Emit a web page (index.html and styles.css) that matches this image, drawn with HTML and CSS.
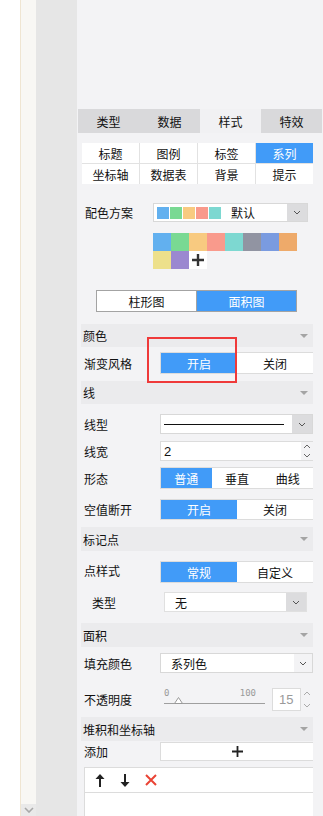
FILE: index.html
```html
<!DOCTYPE html>
<html lang="zh">
<head>
  <meta charset="UTF-8">
  <title>样式</title>
  <link rel="stylesheet" href="styles.css">
</head>
<body>
  <div class="frame">
    <div class="gutter"></div>
    <div class="scroll">
      <div class="scroll-btn">
        <svg width="10" height="6" viewBox="0 0 10 6"><polyline points="1,1 5,5 9,1" fill="none" stroke="#a8a8a8" stroke-width="1.6"/></svg>
      </div>
    </div>
    <div class="side"></div>

    <div class="panel">
      <div class="tabs">
        <div class="tab">类型</div>
        <div class="tab">数据</div>
        <div class="tab active">样式</div>
        <div class="tab">特效</div>
      </div>

      <div class="subtabs">
        <div>标题</div><div>图例</div><div>标签</div><div class="on">系列</div>
        <div>坐标轴</div><div>数据表</div><div>背景</div><div>提示</div>
      </div>

      <div class="scheme">
        <span class="scheme-label">配色方案</span>
        <div class="select scheme-select">
          <span class="mini"><i class="c1"></i><i class="c2"></i><i class="c3"></i><i class="c4"></i><i class="c5"></i></span>
          <span class="scheme-name">默认</span>
          <span class="arrow"><svg width="8" height="5" viewBox="0 0 8 5"><polyline points="1,1 4,4 7,1" fill="none" stroke="#555" stroke-width="1"/></svg></span>
        </div>
      </div>

      <div class="palette">
        <i class="c1"></i><i class="c2"></i><i class="c3"></i><i class="c4"></i><i class="c5"></i><i class="c6"></i><i class="c7"></i><i class="c8"></i>
        <i class="c9"></i><i class="c10"></i>
        <i class="plus"><svg width="12" height="12" viewBox="0 0 12 12"><path d="M6 0V12M0 6H12" stroke="#333" stroke-width="2.4"/></svg></i>
      </div>

      <div class="chart-type">
        <div>柱形图</div>
        <div class="on">面积图</div>
      </div>

      <div class="sec mt12">颜色<span class="tri"></span></div>
      <div class="row mt5">
        <span class="label">渐变风格</span>
        <div class="switch"><div class="on">开启</div><div>关闭</div></div>
      </div>

      <div class="sec mt7">线<span class="tri"></span></div>
      <div class="row mt10">
        <span class="label">线型</span>
        <div class="select">
          <span class="line-sample"></span>
          <span class="arrow"><svg width="8" height="5" viewBox="0 0 8 5"><polyline points="1,1 4,4 7,1" fill="none" stroke="#555" stroke-width="1"/></svg></span>
        </div>
      </div>
      <div class="row mt7">
        <span class="label">线宽</span>
        <div class="number">
          <span class="num-val">2</span>
          <span class="spin">
            <svg width="8" height="5" viewBox="0 0 8 5"><polyline points="1,4 4,1 7,4" fill="none" stroke="#666" stroke-width="1"/></svg>
            <svg width="8" height="5" viewBox="0 0 8 5"><polyline points="1,1 4,4 7,1" fill="none" stroke="#666" stroke-width="1"/></svg>
          </span>
        </div>
      </div>
      <div class="row mt6">
        <span class="label">形态</span>
        <div class="switch three"><div class="on">普通</div><div>垂直</div><div>曲线</div></div>
      </div>
      <div class="row mt10">
        <span class="label">空值断开</span>
        <div class="switch short"><div class="on">开启</div><div>关闭</div></div>
      </div>

      <div class="sec mt7 tall">标记点<span class="tri"></span></div>
      <div class="row mt10">
        <span class="label up">点样式</span>
        <div class="switch"><div class="on">常规</div><div>自定义</div></div>
      </div>
      <div class="row mt9">
        <span class="label sub">类型</span>
        <div class="select narrow">
          <span class="sel-text">无</span>
          <span class="arrow"><svg width="8" height="5" viewBox="0 0 8 5"><polyline points="1,1 4,4 7,1" fill="none" stroke="#555" stroke-width="1"/></svg></span>
        </div>
      </div>

      <div class="sec mt11 tall">面积<span class="tri"></span></div>
      <div class="row mt6">
        <span class="label">填充颜色</span>
        <div class="select">
          <span class="sel-text">系列色</span>
          <span class="arrow light"><svg width="8" height="5" viewBox="0 0 8 5"><polyline points="1,1 4,4 7,1" fill="none" stroke="#555" stroke-width="1"/></svg></span>
        </div>
      </div>
      <div class="row mt15">
        <span class="label">不透明度</span>
        <div class="slider">
          <span class="ticks"><span>0</span><span>100</span></span>
          <span class="track"><svg class="thumb" width="9" height="7" viewBox="0 0 9 7"><polygon points="4.5,0.5 8.5,6.5 0.5,6.5" fill="#fff" stroke="#999" stroke-width="1"/></svg></span>
        </div>
        <div class="number small">
          <span class="num-val grey">15</span>
        </div>
        <span class="spin loose">
          <svg width="8" height="5" viewBox="0 0 8 5"><polyline points="1,4 4,1 7,4" fill="none" stroke="#aaa" stroke-width="1"/></svg>
          <svg width="8" height="5" viewBox="0 0 8 5"><polyline points="1,1 4,4 7,1" fill="none" stroke="#aaa" stroke-width="1"/></svg>
        </span>
      </div>

      <div class="sec mt6 tall">堆积和坐标轴<span class="tri"></span></div>
      <div class="row mt1">
        <span class="label">添加</span>
        <div class="add-btn"><svg width="11" height="11" viewBox="0 0 11 11"><path d="M5.5 0V11M0 5.5H11" stroke="#222" stroke-width="1.8"/></svg></div>
      </div>

      <div class="axis-box">
        <div class="axis-tools">
          <svg width="10" height="13" viewBox="0 0 10 13"><path d="M5 13V3" stroke="#222" stroke-width="2"/><polygon points="5,0 9.5,5 0.5,5" fill="#222"/></svg>
          <svg width="10" height="13" viewBox="0 0 10 13"><path d="M5 0V10" stroke="#222" stroke-width="2"/><polygon points="5,13 9.5,8 0.5,8" fill="#222"/></svg>
          <svg width="12" height="12" viewBox="0 0 12 12"><path d="M1 1L11 11M11 1L1 11" stroke="#ea4335" stroke-width="2"/></svg>
        </div>
      </div>

      <div class="mark"></div>
    </div>
  </div>
</body>
</html>
```

FILE: styles.css
```css
body {
  margin: 0;
  font-family: "Noto Sans CJK SC", "Noto Sans", sans-serif;
  font-size: 12px;
  color: #111;
  background: #fff;
}
.frame {
  display: flex;
  width: 323px;
  height: 816px;
  overflow: hidden;
}
.gutter {
  width: 20px;
  background: #fff;
  border-right: 1px solid #efe5d2;
}
.scroll {
  width: 15px;
  background: #f8f7f4;
  display: flex;
  flex-direction: column;
  justify-content: flex-end;
}
.scroll-btn {
  height: 12px;
  background: #e9e9e9;
  display: flex;
  align-items: center;
  justify-content: center;
}
.side {
  width: 41px;
  background: #e6e6e6;
}
.panel {
  position: relative;
  width: 246px;
  background: #f3f3f5;
  padding: 109px 10px 0 4px;
  box-sizing: border-box;
}

/* tabs */
.tabs {
  display: flex;
  width: 244px;
  margin-left: -3px;
  height: 24px;
}
.tab {
  flex: 1;
  display: flex;
  align-items: center;
  justify-content: center;
  background: #d9d9db;
  font-size: 12px;
}
.tab.active {
  background: #f1f1f3;
}

.subtabs {
  display: grid;
  grid-template-columns: repeat(4, 1fr);
  gap: 1px;
  background: #e2e2e2;
  margin: 10px 0 0 1px;
  width: 231px;
}
.subtabs div {
  height: 20px;
  background: #fff;
  display: flex;
  align-items: center;
  justify-content: center;
}
.subtabs .on {
  background: #419bf8;
  color: #fff;
}

/* color scheme */
.scheme {
  display: flex;
  align-items: center;
  margin-top: 19px;
  height: 19px;
}
.scheme-label {
  width: 72px;
  padding-left: 4px;
  box-sizing: border-box;
}
.select {
  flex: 1;
  height: 19px;
  background: #fff;
  border: 1px solid #d8d8d8;
  box-sizing: border-box;
  display: flex;
  align-items: center;
}
.scheme-select {
  flex: none;
  width: 155px;
}
.mini {
  display: flex;
  gap: 1px;
  margin-left: 3px;
}
.mini i {
  width: 12px;
  height: 12px;
}
.scheme-name {
  margin-left: 10px;
  flex: 1;
}
.arrow {
  width: 20px;
  align-self: stretch;
  margin-left: auto;
  background: #dcdcde;
  display: flex;
  align-items: center;
  justify-content: center;
}
.arrow.light {
  background: #f3f3f5;
  width: 18px;
}
.c1 { background: #62b0ef; }
.c2 { background: #79d993; }
.c3 { background: #f8ca80; }
.c4 { background: #f99a8c; }
.c5 { background: #7dd8d1; }
.c6 { background: #9194a2; }
.c7 { background: #7a9be0; }
.c8 { background: #eeaa6a; }
.c9 { background: #ede08b; }
.c10 { background: #9b88d0; }

.palette {
  display: grid;
  grid-template-columns: repeat(8, 18px);
  grid-auto-rows: 18px;
  margin: 11px 0 0 72px;
}
.palette i {
  display: block;
}
.palette .plus {
  background: #fff;
  display: flex;
  align-items: center;
  justify-content: center;
}

.chart-type {
  display: flex;
  width: 201px;
  height: 22px;
  margin: 21px 0 0 15px;
  border: 1px solid #a3a3a3;
  box-sizing: border-box;
}
.chart-type div {
  flex: 1;
  background: #fff;
  display: flex;
  align-items: center;
  justify-content: center;
}
.chart-type .on {
  background: #419bf8;
  color: #fff;
  border-left: 1px solid #a3a3a3;
}

/* sections */
.sec {
  position: relative;
  height: 23px;
  background: #ebebed;
  display: flex;
  align-items: center;
  padding-left: 2px;
}
.sec.tall {
  height: 24px;
}
.tri {
  position: absolute;
  right: 5px;
  top: 10px;
  border-left: 4px solid transparent;
  border-right: 4px solid transparent;
  border-top: 4px solid #a4a4a4;
}
.row {
  display: flex;
  align-items: center;
}
.label {
  width: 79px;
  flex: none;
  padding-left: 3px;
  box-sizing: border-box;
}
.label.up {
  align-self: flex-start;
  margin-top: 1px;
}
.label.sub {
  padding-left: 11px;
  width: 83px;
}
.switch {
  flex: 1;
  display: flex;
  height: 22px;
  border: 1px solid #dcdcdc;
  border-right: none;
  box-sizing: border-box;
  background: #fff;
}
.switch.short {
  height: 21px;
}
.switch div {
  flex: 1;
  display: flex;
  align-items: center;
  justify-content: center;
}
.switch .on {
  background: #419bf8;
  color: #fff;
}
.line-sample {
  flex: 1;
  height: 1px;
  background: #111;
  margin: 0 8px 0 3px;
}
.number {
  flex: 1;
  height: 20px;
  background: #fff;
  border: 1px solid #dcdcdc;
  border-right: none;
  box-sizing: border-box;
  display: flex;
  align-items: center;
}
.num-val {
  flex: 1;
  padding-left: 3px;
  font-family: "Liberation Sans", sans-serif;
  font-size: 13px;
}
.num-val.grey {
  color: #9a9a9a;
  padding-left: 6px;
}
.spin {
  width: 12px;
  align-self: stretch;
  background: #f3f3f5;
  display: flex;
  flex-direction: column;
  align-items: center;
  justify-content: space-around;
}
.spin.loose {
  height: 23px;
  align-self: auto;
  justify-content: space-between;
  padding: 3px 0;
  box-sizing: border-box;
}
.select.narrow {
  flex: none;
  width: 143px;
  height: 20px;
  border-color: #e0e0e0;
}
.sel-text {
  flex: 1;
  padding-left: 10px;
}
.row .select {
  height: 20px;
}

.slider {
  width: 101px;
  margin-left: 4px;
  height: 23px;
  display: flex;
  flex-direction: column;
  justify-content: flex-start;
}
.ticks {
  display: flex;
  justify-content: space-between;
  padding-right: 9px;
  font-family: "DejaVu Sans Mono", monospace;
  font-size: 9px;
  color: #9a9a9a;
  line-height: 11px;
}
.track {
  position: relative;
  height: 1px;
  background: #9f9f9f;
  margin-top: 4px;
}
.thumb {
  position: absolute;
  left: 10px;
  top: -6px;
}
.number.small {
  flex: none;
  width: 29px;
  height: 23px;
  margin-left: 7px;
  border-right: 1px solid #dcdcdc;
}

.add-btn {
  flex: 1;
  height: 19px;
  background: #fff;
  border: 1px solid #dcdcdc;
  border-right: none;
  box-sizing: border-box;
  display: flex;
  align-items: center;
  justify-content: center;
}
.axis-box {
  margin: 6px 0 0 3px;
  height: 60px;
  background: #fff;
  border: 1px solid #dcdcdc;
  border-right: none;
}
.axis-tools {
  display: flex;
  align-items: center;
  gap: 15px;
  height: 24px;
  padding-left: 10px;
  border-bottom: 1px solid #dcdcdc;
}

.mt1 { margin-top: 1px; }
.mt5 { margin-top: 5px; }
.mt6 { margin-top: 6px; }
.mt7 { margin-top: 7px; }
.mt9 { margin-top: 9px; }
.mt10 { margin-top: 10px; }
.mt11 { margin-top: 11px; }
.mt12 { margin-top: 12px; }
.mt15 { margin-top: 15px; }

.mark {
  position: absolute;
  left: 70px;
  top: 337px;
  width: 90px;
  height: 46px;
  border: 2px solid #ef3a3a;
  box-sizing: border-box;
}
```
